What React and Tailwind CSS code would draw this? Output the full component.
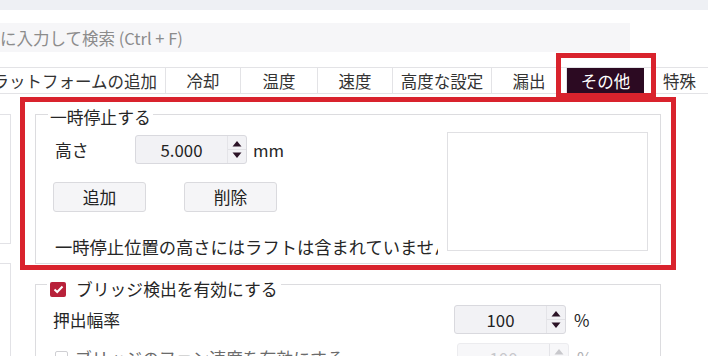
const tabs = [
  { label: "ラットフォームの追加", w: "w-[166px]", align: "justify-end pr-[8px]" },
  { label: "冷却", w: "w-[75px]" },
  { label: "温度", w: "w-[77px]" },
  { label: "速度", w: "w-[75px]" },
  { label: "高度な設定", w: "w-[99px]" },
  { label: "漏出", w: "w-[75px]" },
  { label: "その他", w: "w-[77px]", active: true },
  { label: "特殊", w: "w-[72px]" },
];

function Arrows({ disabled }) {
  const c = disabled ? "#c8c8cc" : "#2b1326";
  return (
    <svg width="18" height="27" viewBox="0 0 18 27" className="shrink-0">
      <line x1="0" y1="13.5" x2="18" y2="13.5" stroke="#e2e2e6" strokeWidth="1" />
      <polygon points="4.5,10.5 13.5,10.5 9,5" fill={c} />
      {!disabled && <polygon points="4.5,16.5 13.5,16.5 9,22" fill={c} />}
    </svg>
  );
}

function SpinBox({ value, disabled, className = "" }) {
  return (
    <div
      className={`flex h-[29px] w-[112px] items-center rounded-[3px] border ${
        disabled ? "border-[#ececef] bg-[#f7f7f9] text-[#c8c8cc]" : "border-[#d9d9de] bg-[#f2f2f5] text-[#222]"
      } ${className}`}
    >
      <span className="flex-1 text-center">{value}</span>
      <div className="border-l border-[#e4e4e8]">
        <Arrows disabled={disabled} />
      </div>
    </div>
  );
}

function Button({ children }) {
  return (
    <button className="flex h-[30px] w-[93px] items-center justify-center rounded-[3px] border border-[#dadade] bg-[#f5f5f7] text-[#222]">
      {children}
    </button>
  );
}

export default function App() {
  return (
    <div className="relative h-[356px] w-[708px] overflow-hidden bg-white font-['Noto_Sans_CJK_JP',sans-serif] text-[16.8px] leading-[20px] text-[#262626]">
      <div className="h-[10px] bg-[#eef0f4]" />

      <div className="mt-[13px] flex h-[29px] w-[630px] items-center whitespace-nowrap bg-[#f6f6f8] text-[16.5px] text-[#8c8c8c]">
        に入力して検索 (Ctrl + F)
      </div>

      <div className="mt-[15px] flex h-[27px] border-y border-[#e3e3e6] whitespace-nowrap text-[16.5px]">
        {tabs.map((t) => (
          <div
            key={t.label}
            className={`flex shrink-0 items-center ${t.w} ${t.align ?? "justify-center"} ${
              t.active ? "bg-[#2c0a22] text-white" : "border-r border-[#e3e3e6] text-[#333]"
            }`}
          >
            {t.label}
          </div>
        ))}
      </div>

      <div className="mt-[20px] flex">
        <div className="w-[11px] shrink-0">
          <div className="h-[130px] border-y border-r border-[#e2e2e6]" />
          <div className="mt-[19px] h-[120px] border-t border-r border-[#e2e2e6]" />
        </div>

        <div className="ml-[24px] w-[626px]">
          <div className="h-[150px] border border-[#dcdcdf]">
            <div className="ml-[12px] -mt-[8px] w-fit bg-white px-[2px]">一時停止する</div>
            <div className="flex items-start">
              <div className="ml-[19px] w-[386px]">
                <div className="mt-[8px] flex h-[29px] items-center">
                  <span className="w-[80px]">高さ</span>
                  <SpinBox value="5.000" />
                  <span className="ml-[6px]">mm</span>
                </div>
                <div className="-ml-[2px] mt-[18px] flex gap-[38px]">
                  <Button>追加</Button>
                  <Button>削除</Button>
                </div>
                <div className="mt-[25px] w-[383px] overflow-hidden whitespace-nowrap text-[17.3px]">
                  一時停止位置の高さにはラフトは含まれていません。
                </div>
              </div>
              <div className="ml-[6px] mt-[5px] h-[119px] w-[201px] border border-[#e0e0e3] bg-white" />
            </div>
          </div>

          <div className="mt-[20px] h-[120px] border border-[#dcdcdf]">
            <div className="ml-[11px] -mt-[6px] flex w-fit items-center bg-white px-[3px]">
              <span className="flex h-[15px] w-[16px] items-center justify-center rounded-[2px] bg-[#b8213a]">
                <svg width="11" height="9" viewBox="0 0 11 9">
                  <path d="M1.5 4.5 L4.2 7 L9.5 1.5" fill="none" stroke="white" strokeWidth="2" />
                </svg>
              </span>
              <span className="ml-[10px]">ブリッジ検出を有効にする</span>
            </div>
            <div className="mt-[6px] flex h-[29px] items-center">
              <span className="ml-[17px] w-[401px]">押出幅率</span>
              <SpinBox value="100" />
              <span className="ml-[8px]">%</span>
            </div>
            <div className="mt-[9px] flex h-[29px] items-center">
              <span className="ml-[19px] h-[13px] w-[13px] shrink-0 rounded-[2px] border border-[#cfcfd3] bg-white" />
              <span className="ml-[7px] w-[382px] whitespace-nowrap text-[#6b6b6b]">ブリッジのファン速度を有効にする</span>
              <SpinBox value="100" disabled />
              <span className="ml-[8px] text-[#b0b0b4]">%</span>
            </div>
          </div>
        </div>
      </div>

      <div className="absolute left-[556px] top-[53px] h-[45px] w-[100px] border-[5px] border-[#d9232d]" />
      <div className="absolute left-[20px] top-[97px] h-[173px] w-[656px] border-[5px] border-[#d9232d]" />
    </div>
  );
}
